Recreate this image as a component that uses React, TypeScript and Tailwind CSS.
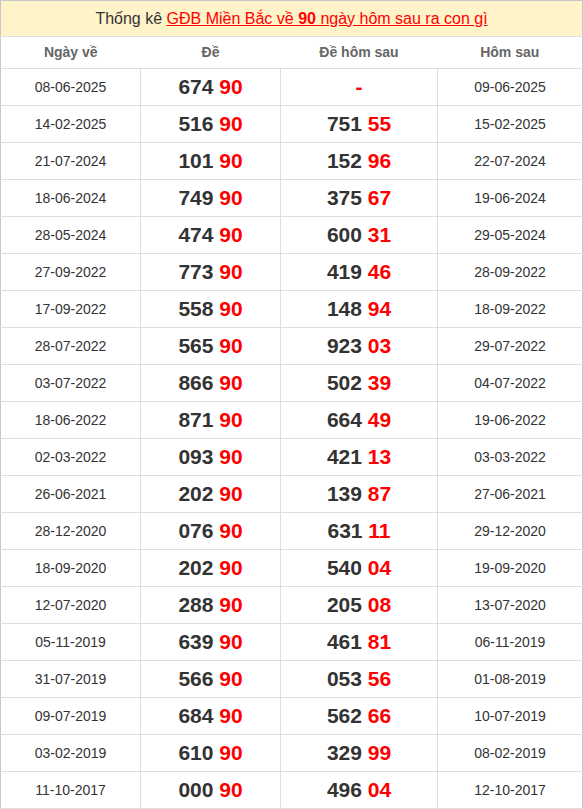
const ROWS: [string, string, string, string, string][] = [
  ['08-06-2025', '674', '', '', '09-06-2025'],
  ['14-02-2025', '516', '751', '55', '15-02-2025'],
  ['21-07-2024', '101', '152', '96', '22-07-2024'],
  ['18-06-2024', '749', '375', '67', '19-06-2024'],
  ['28-05-2024', '474', '600', '31', '29-05-2024'],
  ['27-09-2022', '773', '419', '46', '28-09-2022'],
  ['17-09-2022', '558', '148', '94', '18-09-2022'],
  ['28-07-2022', '565', '923', '03', '29-07-2022'],
  ['03-07-2022', '866', '502', '39', '04-07-2022'],
  ['18-06-2022', '871', '664', '49', '19-06-2022'],
  ['02-03-2022', '093', '421', '13', '03-03-2022'],
  ['26-06-2021', '202', '139', '87', '27-06-2021'],
  ['28-12-2020', '076', '631', '11', '29-12-2020'],
  ['18-09-2020', '202', '540', '04', '19-09-2020'],
  ['12-07-2020', '288', '205', '08', '13-07-2020'],
  ['05-11-2019', '639', '461', '81', '06-11-2019'],
  ['31-07-2019', '566', '053', '56', '01-08-2019'],
  ['09-07-2019', '684', '562', '66', '10-07-2019'],
  ['03-02-2019', '610', '329', '99', '08-02-2019'],
  ['11-10-2017', '000', '496', '04', '12-10-2017'],
]

export default function App() {
  return (
    <div className="w-[583px] bg-white font-['Liberation_Sans',Arial,sans-serif]">
      <table className="w-full border-collapse border border-[#c8c8c8] table-fixed">
        <colgroup>
          <col className="w-[140px]" />
          <col className="w-[140px]" />
          <col className="w-[157px]" />
          <col />
        </colgroup>
        <thead>
          <tr>
            <th colSpan={4} className="h-[36px] bg-[#fff3c9] text-center text-[16px] font-normal text-[#333] border-b border-[#dedede]">
              Thống kê{' '}
              <a className="text-[#ff0000] underline">
                GĐB Miền Bắc về <b>90</b> ngày hôm sau ra con gì
              </a>
            </th>
          </tr>
          <tr className="h-[32px] text-[14px] font-bold text-[#666]">
            <th className="border-b border-[#dedede]">Ngày về</th>
            <th className="border-b border-[#dedede]">Đề</th>
            <th className="border-b border-[#dedede]">Đề hôm sau</th>
            <th className="border-b border-[#dedede]">Hôm sau</th>
          </tr>
        </thead>
        <tbody>
          {ROWS.map(([d1, a, b, c, d2]) => (
            <tr key={d1} className="h-[37px]">
              <td className="border border-[#dedede] border-l-[#c8c8c8] text-center text-[14px] text-[#333]">{d1}</td>
              <td className="border border-[#dedede] text-center text-[21px] font-bold text-[#333]">
                {a} <span className="text-[#ff0000]">90</span>
              </td>
              <td className="border border-[#dedede] text-center text-[21px] font-bold text-[#333]">
                {b ? (
                  <>
                    {b} <span className="text-[#ff0000]">{c}</span>
                  </>
                ) : (
                  <span className="text-[#ff0000]">-</span>
                )}
              </td>
              <td className="border border-[#dedede] border-r-[#c8c8c8] text-center text-[14px] text-[#333]">{d2}</td>
            </tr>
          ))}
        </tbody>
      </table>
    </div>
  )
}
